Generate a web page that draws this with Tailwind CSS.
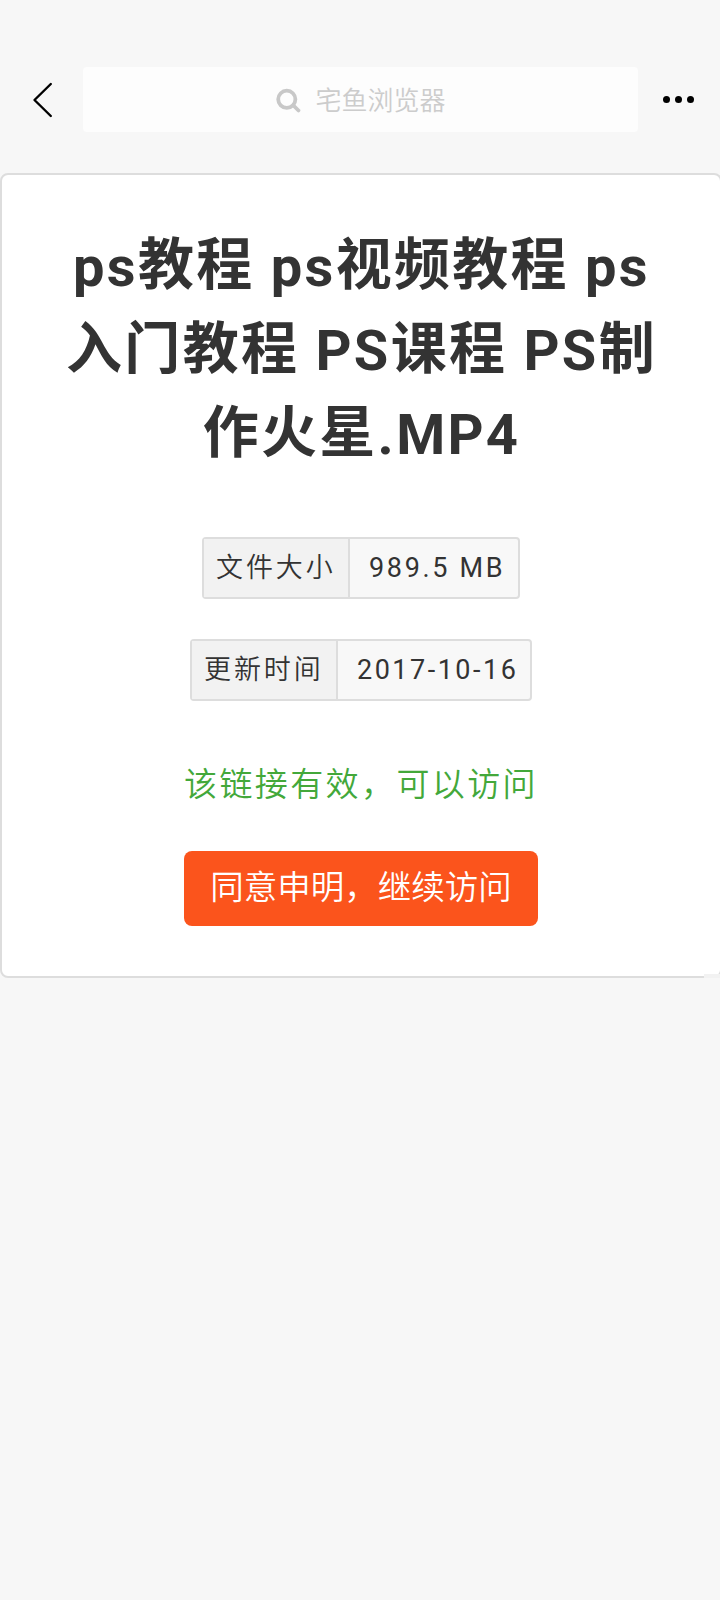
<!DOCTYPE html>
<html lang="zh-CN">
<head>
<meta charset="utf-8">
<title>宅鱼浏览器</title>
<script src="https://cdn.jsdelivr.net/npm/@tailwindcss/browser@4"></script>
</head>
<body class="min-h-[1600px] w-[720px] overflow-x-hidden bg-[#f7f7f7] font-[Roboto,'Noto_Sans_CJK_SC',sans-serif] text-[#333]">
<header class="flex h-[173px] items-start pt-[67px]">
  <div class="flex h-[66px] w-[83px] items-center pl-[32px]">
    <svg class="h-[36px] w-[23px]" viewBox="0 0 23 36" fill="none" stroke="#000" stroke-width="2.4" stroke-linecap="round" stroke-linejoin="round"><path d="M18.8 2 2.5 18l16.3 16"/></svg>
  </div>
  <div class="flex h-[65px] w-[555px] items-center justify-center gap-[13px] rounded bg-[#fdfdfd] pt-[2px] pl-px text-[26px] text-[#ccc]">
    <svg class="h-[26px] w-[26px]" viewBox="0 0 26 26" fill="none" stroke="#c8c8c8" stroke-width="3.8" stroke-linecap="round"><circle cx="10.8" cy="11.3" r="8.6"/><path d="m17.5 17.5 5 5"/></svg>
    <span class="pt-px font-[350]">宅鱼浏览器</span>
  </div>
  <div class="flex h-[65px] flex-1 items-center justify-center gap-[5px] pr-[1px]">
    <i class="h-[7px] w-[7px] rounded-full bg-black"></i><i class="h-[7px] w-[7px] rounded-full bg-black"></i><i class="h-[7px] w-[7px] rounded-full bg-black"></i>
  </div>
</header>
<main class="relative flex h-[805px] w-[722px] flex-col items-center rounded-lg border-2 border-[#ddd] bg-white pt-[50px]">
  <h1 class="pl-px text-center text-[56px] leading-[84px] font-bold tracking-[2.3px] whitespace-nowrap">ps<span class="align-[2px] leading-none">教程</span> ps<span class="align-[2px] leading-none">视频教程</span> ps<br><span class="align-[2px] leading-none">入门教程</span> PS<span class="align-[2px] leading-none">课程</span> PS<span class="align-[2px] leading-none">制</span><br><span class="align-[2px] leading-none">作火星</span>.MP4</h1>
  <div class="mt-[60px] flex h-[62px] w-[318px] rounded border-2 border-[#ddd] bg-[#f8f8f8] text-[27px] leading-[58px] tracking-[2.65px]">
    <span class="w-[146px] border-r-2 border-[#ddd] bg-[#f2f2f2] pl-3 font-[350] tracking-[2.9px]">文件大小</span><span class="pl-[19px]">989.5 MB</span>
  </div>
  <div class="mt-10 flex h-[62px] w-[342px] rounded border-2 border-[#ddd] bg-[#f8f8f8] text-[27px] leading-[58px] tracking-[2.5px]">
    <span class="w-[146px] border-r-2 border-[#ddd] bg-[#f2f2f2] pl-3 font-[350] tracking-[2.9px]">更新时间</span><span class="pl-[19px]">2017-10-16</span>
  </div>
  <p class="mt-[59px] h-[50px] text-[33px] leading-[50px] font-[350] tracking-[2.4px] whitespace-nowrap text-[#43a83a]">该链接有效，可以访问</p>
  <button class="mt-[41px] h-[75px] w-[354px] rounded-lg bg-[#fb541c] pb-px text-[33.5px] font-[350] whitespace-nowrap text-white">同意申明，继续访问</button>
  <span class="absolute -right-0.5 -bottom-0.5 h-1 w-[18px] bg-[#f2f2f2]"></span>
</main>
</body>
</html>
